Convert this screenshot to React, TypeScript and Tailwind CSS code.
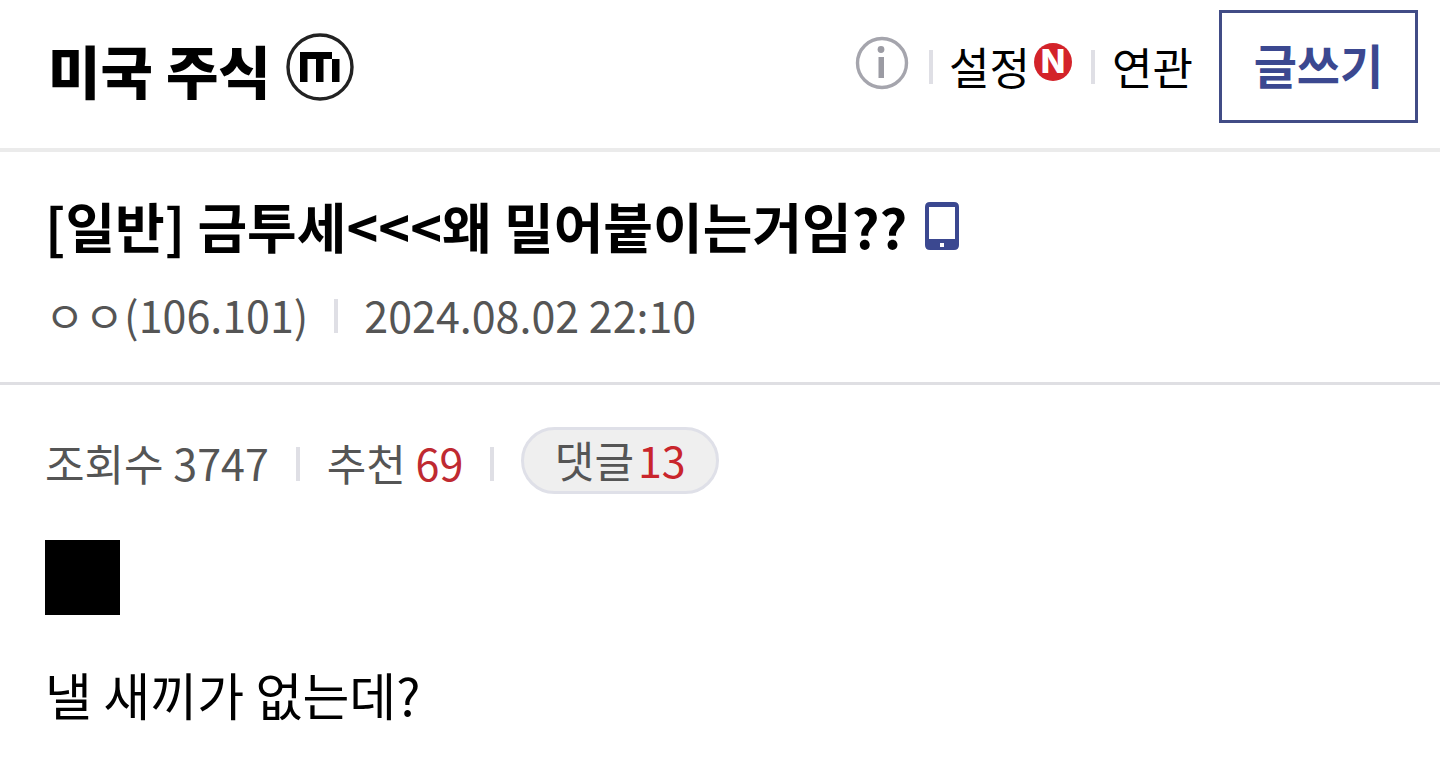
function Divider() {
  return <span aria-hidden="true" className="h-[34px] w-[4px] shrink-0 bg-[#dfdfe5]" />;
}

function MobileLogo() {
  return (
    <svg viewBox="0 0 68 68" className="mb-[4px] size-[68px] shrink-0" aria-hidden="true">
      <circle cx="34" cy="34" r="32" fill="none" stroke="#222" strokeWidth="3.4" />
      <g fill="#000">
        <rect x="14" y="19" width="32" height="7" />
        <rect x="14" y="19" width="7.500" height="30" />
        <rect x="30" y="19" width="7.500" height="30" />
        <rect x="46" y="26" width="7.500" height="23" />
      </g>
    </svg>
  );
}

function InfoIcon() {
  return (
    <svg viewBox="0 0 54 54" className="size-[54px]" aria-hidden="true">
      <circle cx="27" cy="27" r="24.5" fill="none" stroke="#a5a5ad" strokeWidth="3.4" />
      <circle cx="26" cy="13.500" r="3.400" fill="#9b9ba3" />
      <rect x="23.500" y="21" width="5.500" height="21" fill="#9b9ba3" />
    </svg>
  );
}

function PhoneIcon() {
  return (
    <svg viewBox="0 0 36 50" className="h-[50px] w-[36px] shrink-0" role="img" aria-label="모바일">
      <path
        fill="#3b4890"
        fillRule="evenodd"
        d="M6 1H30Q35 1 35 6V44Q35 49 30 49H6Q1 49 1 44V6Q1 1 6 1ZM5 6V38H31V6ZM16 42V46H20V42Z"
      />
    </svg>
  );
}

export default function App() {
  return (
    <div className="min-h-screen bg-white font-['Noto_Sans_CJK_KR',sans-serif] text-black">
      <header className="flex items-center justify-between border-b-4 border-[#ebebeb] pt-[10px] pr-[22px] pb-[25px] pl-[48px]">
        <h1 className="flex items-center gap-[15px] pt-[4px] text-[57px] leading-[64px] font-black">
          <a href="#gallery">미국 주식</a>
          <MobileLogo />
        </h1>
        <nav className="flex items-center text-[44px] leading-[64px]">
          <button type="button" aria-label="정보" className="mr-[20px] mb-[8px]">
            <InfoIcon />
          </button>
          <Divider />
          <a href="#settings" className="ml-[16px] flex items-center pb-[2px]">
            설정
            <span className="mr-[19px] mb-[8px] ml-[4px] flex size-[38px] items-center justify-center rounded-full bg-[#d3232a] font-['Inter',sans-serif] text-[32px] leading-[38px] font-extrabold text-white">
              N
            </span>
          </a>
          <Divider />
          <a href="#related" className="ml-[17px] pb-[2px]">
            연관
          </a>
          <button
            type="button"
            className="ml-[26px] h-[113px] w-[199px] border-3 border-[#414c86] pb-[6px] text-[47px] font-bold text-[#3b4890]"
          >
            글쓰기
          </button>
        </nav>
      </header>

      <main>
        <div className="border-b-3 border-[#dfdfe3] px-[45px] pt-[38px] pb-[32px]">
          <div className="flex items-center gap-[17px]">
            <h2 className="text-[54px] leading-[72px] font-bold">
              [일반] 금투세&lt;&lt;&lt;왜 밀어붙이는거임??
            </h2>
            <PhoneIcon />
          </div>
          <div className="mt-[20px] flex items-center gap-[26px] text-[43px] leading-[64px] text-[#555]">
            <span className="pb-[4px]">ㅇㅇ(106.101)</span>
            <Divider />
            <time dateTime="2024-08-02T22:10" className="pb-[4px]">
              2024.08.02 22:10
            </time>
          </div>
        </div>

        <div className="flex items-center gap-[27px] px-[45px] pt-[42px] text-[43px] leading-[64px] text-[#555]">
          <span className="pb-[4px]">조회수 3747</span>
          <Divider />
          <span className="pb-[4px]">
            추천 <span className="text-[#bf2a31]">69</span>
          </span>
          <Divider />
          <a
            href="#comments"
            className="mb-[6px] flex h-[67px] w-[198px] items-center justify-center gap-[4px] rounded-full border-3 border-[#dfe0e8] bg-[#efefef] pb-[4px]"
          >
            댓글<span className="text-[#c9252c]">13</span>
          </a>
        </div>

        <article className="px-[45px] pt-[40px]">
          <div className="size-[75px] bg-black" />
          <p className="mt-[41px] text-[51px] leading-[76px]">낼 새끼가 없는데?</p>
        </article>
      </main>
    </div>
  );
}
